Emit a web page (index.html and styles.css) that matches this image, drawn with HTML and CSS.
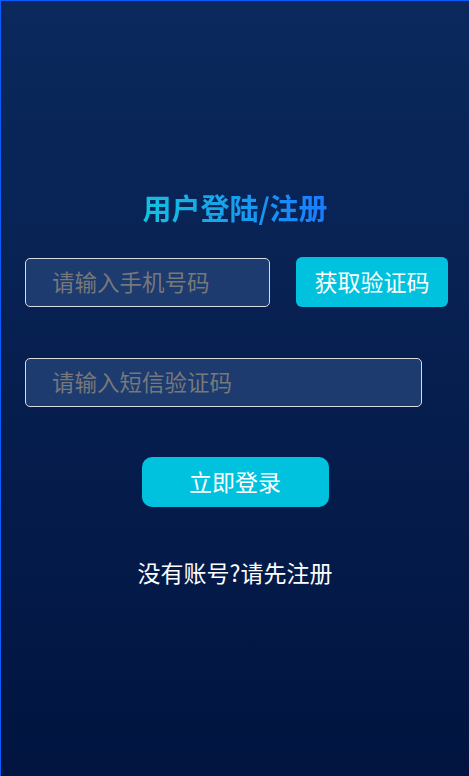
FILE: index.html
```html
<!DOCTYPE html>
<html lang="zh-CN">
<head>
<meta charset="utf-8">
<title>用户登陆/注册</title>
<link rel="stylesheet" href="styles.css">
</head>
<body>
<div class="page">
  <h1 class="title">用户登陆/注册</h1>
  <div class="row">
    <input class="field field-phone" type="text" placeholder="请输入手机号码">
    <button class="btn-code" type="button">获取验证码</button>
  </div>
  <div class="row row-code">
    <input class="field field-code" type="text" placeholder="请输入短信验证码">
  </div>
  <div class="actions">
    <button class="btn-login" type="button">立即登录</button>
  </div>
  <p class="register">没有账号?请先注册</p>
</div>
</body>
</html>
```

FILE: styles.css
```css
html, body {
  margin: 0;
  padding: 0;
  height: 100%;
  overflow: hidden;
}
body {
  font-family: "Noto Sans CJK SC", "Noto Sans", sans-serif;
  background: #01143f;
}
.page {
  box-sizing: border-box;
  height: 100vh;
  border-top: 1px solid #0a5cff;
  border-left: 1px solid #0a5cff;
  background: linear-gradient(180deg, #0b295d 0%, #011440 100%);
  padding-top: 186px;
  display: flex;
  flex-direction: column;
}
.title {
  margin: 0;
  font-size: 29px;
  line-height: 40px;
  font-weight: 700;
  text-align: center;
  align-self: center;
  background: linear-gradient(90deg, #14c2de 0%, #1a7bff 100%);
  -webkit-background-clip: text;
  background-clip: text;
  color: transparent;
}
.row {
  display: flex;
  align-items: flex-end;
  margin-top: 30px;
  padding-left: 24px;
}
.row-code {
  margin-top: 51px;
}
.field {
  box-sizing: border-box;
  height: 49px;
  border: 1px solid #d9dbe0;
  border-radius: 5px;
  background: #1d3b6e;
  padding: 0 0 3px 26px;
  font-family: "Noto Sans CJK SC", sans-serif;
  font-size: 22.5px;
  color: #ffffff;
  outline: none;
}
.field::placeholder {
  color: #77787a;
}
.field-phone {
  width: 245px;
}
.field-code {
  width: 397px;
}
.btn-code {
  box-sizing: border-box;
  margin-left: 26px;
  width: 152px;
  height: 50px;
  border: none;
  border-radius: 6px;
  background: #00c2de;
  color: #ffffff;
  font-family: "Noto Sans CJK SC", sans-serif;
  font-size: 23px;
  padding: 0 0 3px;
}
.actions {
  display: flex;
  justify-content: center;
  margin-top: 50px;
}
.btn-login {
  box-sizing: border-box;
  width: 187px;
  height: 50px;
  border: none;
  border-radius: 10px;
  background: #00c2de;
  color: #ffffff;
  font-family: "Noto Sans CJK SC", sans-serif;
  font-size: 23px;
  padding: 0 0 3px;
}
.register {
  margin: 50px 0 0;
  text-align: center;
  color: #ffffff;
  font-size: 23px;
  line-height: 30px;
}
```
